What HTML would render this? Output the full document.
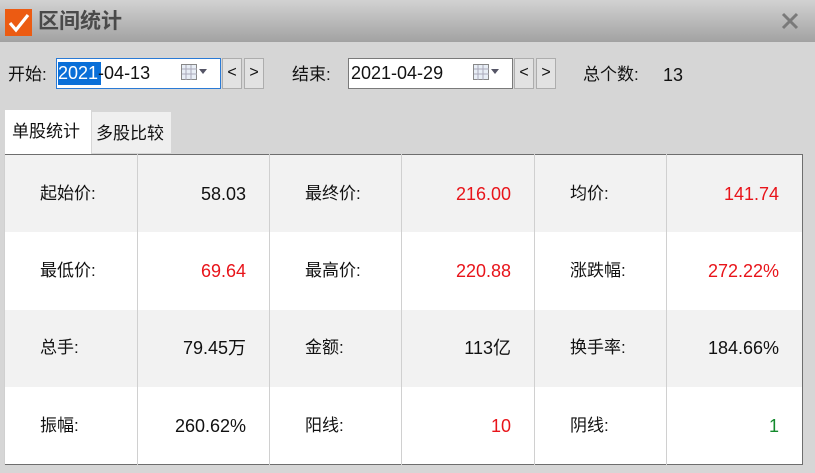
<!DOCTYPE html>
<html><head><meta charset="utf-8"><style>
*{margin:0;padding:0;box-sizing:border-box}
body{width:815px;height:473px;background:#d6d6d6;font-family:"Liberation Sans","Noto Sans CJK SC",sans-serif;position:relative;overflow:hidden;color:#111}
.title{position:absolute;left:0;top:0;width:815px;height:42px;background:linear-gradient(#d2d2d2,#a2a2a2)}
.t{position:absolute;font-size:17px;white-space:nowrap;line-height:22px}
.box{position:absolute;background:#fff;border:1px solid #7a7a7a;height:31px;top:58px}
.btn{position:absolute;top:58px;width:20px;height:31px;background:#e2e2e2;border:1px solid #adadad;font-size:16px;text-align:center;line-height:28px}
table{position:absolute;left:4px;top:154px;width:799px;height:311px;border-collapse:collapse;border:1px solid #6e6e6e}
td{border-left:1px solid #d0d0d0;font-size:17px;height:77px;padding:0;line-height:20px;vertical-align:middle}
td.l{padding-left:35px}
td.v{text-align:right;padding-right:23px;font-size:18px}
tr.g td{background:#f2f2f2}
tr.w td{background:#fff}
.r{color:#e8141a}.gr{color:#138a2c}
</style></head><body>
<div class="title">
<div style="position:absolute;left:5px;top:9px;width:27px;height:27px;background:#ec5b12"><svg width="27" height="27"><path d="M5 14 L11 21 L23 6" stroke="#fff" stroke-width="3.2" fill="none"/></svg></div>
<div class="t" style="left:38px;top:11px;font-size:21px;font-weight:bold;color:#4a4a4a">区间统计</div>
<svg style="position:absolute;left:781px;top:12px" width="18" height="18"><path d="M2 2L16 16M16 2L2 16" stroke="#7a7a7a" stroke-width="3"/></svg>
</div>
<div class="t" style="left:8px;top:64px">开始:</div>
<div class="box" style="left:56px;width:165px;border-color:#2a7ad5"></div>
<div style="position:absolute;left:58px;top:62px;width:43px;height:23px;background:#0a6fd8"></div>
<div class="t" style="left:58px;top:62px;font-size:18px"><span style="color:#fff">2021</span>-04-13</div>
<svg style="position:absolute;left:181px;top:64px" width="30" height="18"><rect x="0.5" y="0.5" width="15" height="15" fill="#e8eef6" stroke="#888"/><path d="M5 1V16M10 1V16M1 5H16M1 10H16" stroke="#aab"/><path d="M18 5h8l-4 5z" fill="#556"/></svg>
<div class="btn" style="left:222px">&lt;</div>
<div class="btn" style="left:244px">&gt;</div>
<div class="t" style="left:292px;top:64px">结束:</div>
<div class="box" style="left:348px;width:165px"></div>
<div class="t" style="left:351px;top:62px;font-size:18px">2021-04-29</div>
<svg style="position:absolute;left:473px;top:64px" width="30" height="18"><rect x="0.5" y="0.5" width="15" height="15" fill="#e8eef6" stroke="#888"/><path d="M5 1V16M10 1V16M1 5H16M1 10H16" stroke="#aab"/><path d="M18 5h8l-4 5z" fill="#556"/></svg>
<div class="btn" style="left:514px">&lt;</div>
<div class="btn" style="left:536px">&gt;</div>
<div class="t" style="left:583px;top:64px">总个数:</div>
<div class="t" style="left:663px;top:64px;font-size:18px">13</div>
<div style="position:absolute;left:5px;top:110px;width:86px;height:45px;background:#fff"></div>
<div class="t" style="left:12px;top:121px">单股统计</div>
<div style="position:absolute;left:92px;top:112px;width:79px;height:41px;background:#efefef"></div>
<div class="t" style="left:96px;top:123px">多股比较</div>
<table>
<tr class="g"><td class="l" style="width:133px">起始价:</td><td class="v" style="width:132px">58.03</td><td class="l" style="width:132px">最终价:</td><td class="v r" style="width:133px">216.00</td><td class="l" style="width:132px">均价:</td><td class="v r">141.74</td></tr>
<tr class="w"><td class="l">最低价:</td><td class="v r">69.64</td><td class="l">最高价:</td><td class="v r">220.88</td><td class="l">涨跌幅:</td><td class="v r">272.22%</td></tr>
<tr class="g"><td class="l">总手:</td><td class="v">79.45万</td><td class="l">金额:</td><td class="v">113亿</td><td class="l">换手率:</td><td class="v">184.66%</td></tr>
<tr class="w"><td class="l">振幅:</td><td class="v">260.62%</td><td class="l">阳线:</td><td class="v r">10</td><td class="l">阴线:</td><td class="v gr">1</td></tr>
</table>
</body></html>
